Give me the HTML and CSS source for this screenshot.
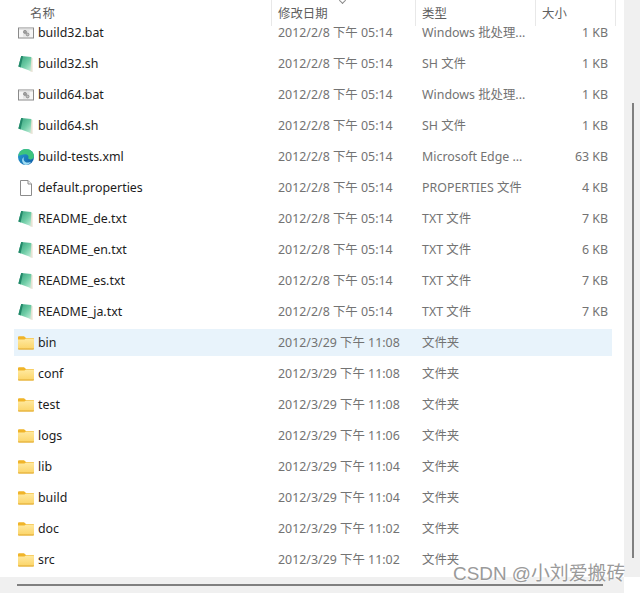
FILE: index.html
```html
<!DOCTYPE html>
<html lang="zh-CN">
<head>
  <meta charset="UTF-8" />
  <title>文件列表</title>
  <link rel="stylesheet" href="styles.css">
</head>
<body>

<svg class="defs" width="0" height="0" aria-hidden="true">
  <defs>
    <linearGradient id="shGreen" x1="0" y1="0" x2="1" y2="1">
      <stop offset="0" stop-color="#2f9c78"/>
      <stop offset="0.55" stop-color="#6ccba4"/>
      <stop offset="1" stop-color="#c4efdb"/>
    </linearGradient>
    <linearGradient id="folderFront" x1="0" y1="0" x2="0" y2="1">
      <stop offset="0" stop-color="#ffe9a0"/>
      <stop offset="1" stop-color="#fbd467"/>
    </linearGradient>
    <linearGradient id="edgeBlue" x1="0" y1="0" x2="1" y2="1">
      <stop offset="0" stop-color="#2aa4d8"/>
      <stop offset="1" stop-color="#0c59a4"/>
    </linearGradient>
    <symbol id="i-bat" viewBox="0 0 16 16">
      <rect x="0.5" y="3" width="15" height="10" fill="#f6f6f6" stroke="#8a8a8a"/>
      <rect x="1" y="3.5" width="14" height="1.2" fill="#dcdcdc"/>
      <rect x="5" y="4.7" width="6.5" height="7" fill="#e4e4e4"/>
      <circle cx="7" cy="6.9" r="1.5" fill="#a8a8a8" stroke="#6e6e6e" stroke-width="0.6"/>
      <circle cx="9.6" cy="9.5" r="1.4" fill="#c4c4c4" stroke="#6e6e6e" stroke-width="0.6"/>
    </symbol>
    <symbol id="i-sh" viewBox="0 0 16 16">
      <path d="M11 1 L14.6 2 L14.6 16 L12.4 15.4 L11 14 Z" fill="#e6e2d4"/>
      <path d="M3.2 0 L13.4 1 L12.6 15 L0.4 10.6 Z" fill="url(#shGreen)"/>
      <path d="M3.2 0 L5 0.2 L2.6 11.4 L0.4 10.6 Z" fill="#23886a"/>
    </symbol>
    <symbol id="i-edge" viewBox="0 0 16 16">
      <circle cx="8" cy="8" r="8" fill="url(#edgeBlue)"/>
      <path d="M0.3 7 C1 2.5 4.5 0 8 0 C12.5 0 16 3.2 16 7.6 C16 9.6 14 10.6 12 10.4 C10.6 10.2 9.8 9.6 10.4 8.6 C11 7.4 9.8 5.2 7.2 5.2 C4 5.2 1.6 6.6 0.3 7 Z" fill="#3dc47e"/>
      <path d="M6 8.2 C4.8 10.5 6.4 13.4 9.6 13.6 C11 13.7 12 13.4 13 12.8 C11.6 15 9.6 16 7.8 16 C5 15.6 3.4 12 4.4 9.8 C4.8 9 5.4 8.4 6 8.2 Z" fill="#9fdcf3"/>
    </symbol>
    <symbol id="i-file" viewBox="0 0 16 16">
      <path d="M2.5 0.5 H10 L13.5 4 V15.5 H2.5 Z" fill="#fff" stroke="#8c8c8c"/>
      <path d="M10 0.5 V4 H13.5" fill="#f2f2f2" stroke="#8c8c8c"/>
    </symbol>
    <symbol id="i-folder" viewBox="0 0 16 14">
      <path d="M0 1.2 Q0 0.2 1 0.2 H6 L8 2 H15 Q16 2 16 3 V6 H0 Z" fill="#f0b429"/>
      <path d="M0 3.4 H6.4 L8 2.6 H15.2 Q16 2.6 16 3.4 V12.6 Q16 13.4 15.2 13.4 H0.8 Q0 13.4 0 12.6 Z" fill="url(#folderFront)"/>
      <path d="M0 12.6 H16 V13 Q16 13.4 15.2 13.4 H0.8 Q0 13.4 0 13 Z" fill="#e0a82e"/>
    </symbol>
  </defs>
</svg>

<div class="window">
  <div class="main">
    <div class="pane">
      <div class="header">
        <div class="head-cell col-name">名称</div>
        <div class="head-cell col-date">修改日期<span class="sort"></span></div>
        <div class="head-cell col-type">类型</div>
        <div class="head-cell col-size">大小</div>
      </div>

      <div class="list">
        <div class="row"><svg class="icon"><use href="#i-bat"/></svg><span class="name">build32.bat</span><span class="date">2012/2/8 下午 05:14</span><span class="type">Windows 批处理...</span><span class="size">1 KB</span></div>
        <div class="row"><svg class="icon"><use href="#i-sh"/></svg><span class="name">build32.sh</span><span class="date">2012/2/8 下午 05:14</span><span class="type">SH 文件</span><span class="size">1 KB</span></div>
        <div class="row"><svg class="icon"><use href="#i-bat"/></svg><span class="name">build64.bat</span><span class="date">2012/2/8 下午 05:14</span><span class="type">Windows 批处理...</span><span class="size">1 KB</span></div>
        <div class="row"><svg class="icon"><use href="#i-sh"/></svg><span class="name">build64.sh</span><span class="date">2012/2/8 下午 05:14</span><span class="type">SH 文件</span><span class="size">1 KB</span></div>
        <div class="row"><svg class="icon"><use href="#i-edge"/></svg><span class="name">build-tests.xml</span><span class="date">2012/2/8 下午 05:14</span><span class="type">Microsoft Edge ...</span><span class="size">63 KB</span></div>
        <div class="row"><svg class="icon"><use href="#i-file"/></svg><span class="name">default.properties</span><span class="date">2012/2/8 下午 05:14</span><span class="type">PROPERTIES 文件</span><span class="size">4 KB</span></div>
        <div class="row"><svg class="icon"><use href="#i-sh"/></svg><span class="name">README_de.txt</span><span class="date">2012/2/8 下午 05:14</span><span class="type">TXT 文件</span><span class="size">7 KB</span></div>
        <div class="row"><svg class="icon"><use href="#i-sh"/></svg><span class="name">README_en.txt</span><span class="date">2012/2/8 下午 05:14</span><span class="type">TXT 文件</span><span class="size">6 KB</span></div>
        <div class="row"><svg class="icon"><use href="#i-sh"/></svg><span class="name">README_es.txt</span><span class="date">2012/2/8 下午 05:14</span><span class="type">TXT 文件</span><span class="size">7 KB</span></div>
        <div class="row"><svg class="icon"><use href="#i-sh"/></svg><span class="name">README_ja.txt</span><span class="date">2012/2/8 下午 05:14</span><span class="type">TXT 文件</span><span class="size">7 KB</span></div>
        <div class="row selected"><svg class="icon"><use href="#i-folder"/></svg><span class="name">bin</span><span class="date">2012/3/29 下午 11:08</span><span class="type">文件夹</span><span class="size"></span></div>
        <div class="row"><svg class="icon"><use href="#i-folder"/></svg><span class="name">conf</span><span class="date">2012/3/29 下午 11:08</span><span class="type">文件夹</span><span class="size"></span></div>
        <div class="row"><svg class="icon"><use href="#i-folder"/></svg><span class="name">test</span><span class="date">2012/3/29 下午 11:08</span><span class="type">文件夹</span><span class="size"></span></div>
        <div class="row"><svg class="icon"><use href="#i-folder"/></svg><span class="name">logs</span><span class="date">2012/3/29 下午 11:06</span><span class="type">文件夹</span><span class="size"></span></div>
        <div class="row"><svg class="icon"><use href="#i-folder"/></svg><span class="name">lib</span><span class="date">2012/3/29 下午 11:04</span><span class="type">文件夹</span><span class="size"></span></div>
        <div class="row"><svg class="icon"><use href="#i-folder"/></svg><span class="name">build</span><span class="date">2012/3/29 下午 11:04</span><span class="type">文件夹</span><span class="size"></span></div>
        <div class="row"><svg class="icon"><use href="#i-folder"/></svg><span class="name">doc</span><span class="date">2012/3/29 下午 11:02</span><span class="type">文件夹</span><span class="size"></span></div>
        <div class="row"><svg class="icon"><use href="#i-folder"/></svg><span class="name">src</span><span class="date">2012/3/29 下午 11:02</span><span class="type">文件夹</span><span class="size"></span></div>
      </div>
    </div>

    <div class="vscroll"><div class="vthumb"></div></div>
  </div>

  <div class="bottom">
    <div class="hscroll"><div class="hthumb"></div></div>
    <div class="corner"></div>
  </div>
</div>

<div class="watermark">CSDN @小刘爱搬砖</div>

</body>
</html>
```

FILE: styles.css
```css
html, body {
  margin: 0;
  padding: 0;
  background: #fff;
}

body {
  width: 640px;
  height: 593px;
  overflow: hidden;
  position: relative;
  font-family: "Noto Sans", "Noto Sans CJK SC", sans-serif;
  font-size: 12.4px;
  color: #737373;
}

.defs {
  display: block;
  height: 0;
}

.window {
  display: flex;
  flex-direction: column;
  height: 593px;
}

.main {
  display: flex;
  flex: 1;
  min-height: 0;
}

.pane {
  width: 624px;
  overflow: hidden;
}

.header {
  position: relative;
  z-index: 2;
  display: flex;
  height: 26px;
  background: #fff;
}

.head-cell {
  box-sizing: border-box;
  height: 26px;
  padding-top: 5px;
  line-height: 18px;
  border-right: 1px solid #e8e8e8;
  color: #5f5f5f;
  position: relative;
}

.col-name {
  width: 272px;
  padding-left: 30px;
}

.col-date {
  width: 144px;
  padding-left: 6px;
}

.col-type {
  width: 120px;
  padding-left: 6px;
}

.col-size {
  width: 80px;
  padding-left: 6px;
}

.sort {
  position: absolute;
  left: 68px;
  top: 0;
  width: 5px;
  height: 5px;
  box-sizing: border-box;
  border-right: 1px solid #8a8a8a;
  border-bottom: 1px solid #8a8a8a;
  transform: translateY(-2px) rotate(45deg);
}

.list {
  margin-top: -9px;
}

.row {
  display: flex;
  align-items: center;
  height: 31px;
  line-height: 18px;
  margin-right: 12px;
  padding-left: 18px;
  box-sizing: border-box;
}

.row.selected {
  background: linear-gradient(#e8f3fb, #e8f3fb) 14px 2px / 598px 27px no-repeat;
}

.icon {
  width: 16px;
  height: 16px;
  flex-shrink: 0;
  margin-right: 4px;
}

.name {
  width: 240px;
  color: #1c1c1c;
  white-space: nowrap;
}

.date {
  width: 144px;
  white-space: nowrap;
}

.type {
  width: 100px;
  white-space: nowrap;
}

.size {
  width: 86px;
  text-align: right;
  white-space: nowrap;
}

.vscroll {
  width: 16px;
  background: #f0f0f0;
  padding-top: 103px;
  box-sizing: border-box;
}

.vthumb {
  width: 2px;
  height: 455px;
  margin-left: 8px;
  background: #808080;
}

.bottom {
  display: flex;
  height: 16px;
}

.hscroll {
  width: 624px;
  background: #f0f0f0;
  padding: 7px 0 0 17px;
  box-sizing: border-box;
}

.hthumb {
  width: 586px;
  height: 2px;
  background: #808080;
}

.corner {
  width: 16px;
  background: #fff;
}

.watermark {
  position: absolute;
  left: 453px;
  top: 562px;
  font-family: "Liberation Sans", "Noto Sans CJK SC", sans-serif;
  font-size: 18.9px;
  line-height: 24px;
  color: #9a9a9a;
  text-shadow: 0 0 2px #fff, 0 0 2px #fff;
  white-space: nowrap;
}
```
